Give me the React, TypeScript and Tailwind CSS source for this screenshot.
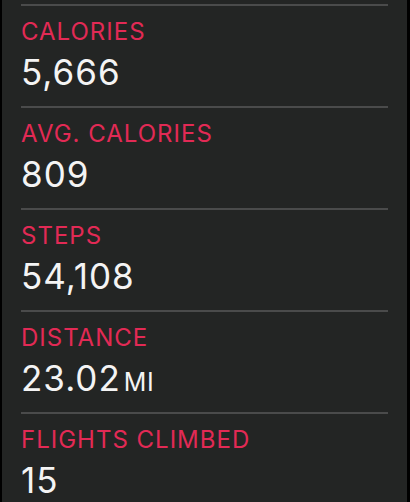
const STATS = [
  { label: "CALORIES", value: "5,666" },
  { label: "AVG. CALORIES", value: "809" },
  { label: "STEPS", value: "54,108" },
  { label: "DISTANCE", value: "23.02", unit: "MI" },
  { label: "FLIGHTS CLIMBED", value: "15" },
] as const;

export default function App() {
  return (
    <div className="flex h-[502px] w-[410px] overflow-hidden bg-black">
      <main
        className="ml-[2px] mr-[3px] flex-1 bg-[#232524] px-[19px] pt-[4px]"
        style={{ fontFamily: "Inter, 'Noto Sans', sans-serif" }}
      >
        {STATS.map((stat) => (
          <section key={stat.label}>
            <div className="h-[2px] bg-[#4a4b4b]" />
            <div className="pb-[17px] pt-[14px]">
              <p className="text-[24px] leading-[24px] tracking-[1px] text-[#e22a55]">{stat.label}</p>
              <p className="mt-[11px] h-[34px] text-[35px] leading-[34px] tracking-[1px] text-[#f4f4f4]">
                {stat.value}
                {"unit" in stat && (
                  <span className="ml-[3px] text-[25px] leading-none tracking-[0.5px]">{stat.unit}</span>
                )}
              </p>
            </div>
          </section>
        ))}
      </main>
    </div>
  );
}
